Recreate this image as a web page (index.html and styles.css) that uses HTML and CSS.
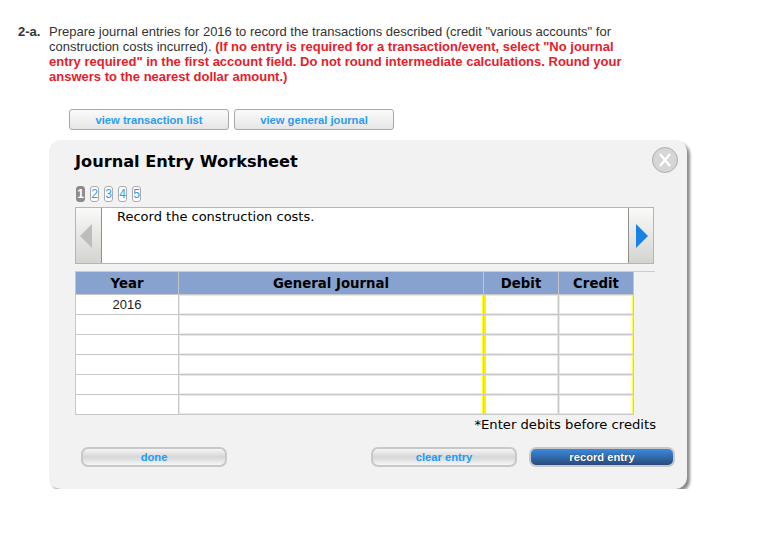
FILE: index.html
```html
<!DOCTYPE html>
<html lang="en">
<head>
  <meta charset="UTF-8" />
  <title>Journal Entry Worksheet</title>
  <link rel="stylesheet" href="styles.css">
</head>
<body>

  <div class="question">
    <div class="question-num">2-a.</div>
    <p class="question-text">Prepare journal entries for 2016 to record the transactions described (credit "various accounts" for construction costs incurred). <strong>(If no entry is required for a transaction/event, select "No journal entry required" in the first account field. Do not round intermediate calculations. Round your answers to the nearest dollar amount.)</strong></p>
  </div>

  <div class="view-btns">
    <button class="view-btn">view transaction list</button>
    <button class="view-btn">view general journal</button>
  </div>

  <div class="panel">
    <button class="close-btn">
      <svg viewBox="0 0 12 14" width="12" height="14"><path d="M1 1 L11 13 M11 1 L1 13" stroke="#fff" stroke-width="2.2" fill="none"/></svg>
    </button>

    <h2>Journal Entry Worksheet</h2>

    <div class="pager">
      <span class="page active">1</span>
      <span class="page">2</span>
      <span class="page">3</span>
      <span class="page">4</span>
      <span class="page">5</span>
    </div>

    <div class="message">
      <div class="arrow-btn prev">
        <svg viewBox="0 0 12 24" width="12" height="24"><polygon points="12,0 12,24 0,12" fill="#bcbdbc"/></svg>
      </div>
      <div class="message-text">Record the construction costs.</div>
      <div class="arrow-btn next">
        <svg viewBox="0 0 12 24" width="12" height="24"><polygon points="0,0 12,12 0,24" fill="#1782e4"/></svg>
      </div>
    </div>

    <div class="divider"></div>

    <table class="journal">
      <thead>
        <tr>
          <th class="col-year">Year</th>
          <th class="col-account">General Journal</th>
          <th class="col-amount">Debit</th>
          <th class="col-amount">Credit</th>
        </tr>
      </thead>
      <tbody>
        <tr><td class="year">2016</td><td class="entry"></td><td class="entry debit"></td><td class="entry"></td></tr>
        <tr><td class="year"></td><td class="entry"></td><td class="entry debit"></td><td class="entry"></td></tr>
        <tr><td class="year"></td><td class="entry"></td><td class="entry debit"></td><td class="entry"></td></tr>
        <tr><td class="year"></td><td class="entry"></td><td class="entry debit"></td><td class="entry"></td></tr>
        <tr><td class="year"></td><td class="entry"></td><td class="entry debit"></td><td class="entry"></td></tr>
        <tr><td class="year"></td><td class="entry"></td><td class="entry debit"></td><td class="entry"></td></tr>
      </tbody>
    </table>

    <div class="note">*Enter debits before credits</div>

    <div class="actions">
      <button class="pill">done</button>
      <div class="actions-right">
        <button class="pill">clear entry</button>
        <button class="pill primary">record entry</button>
      </div>
    </div>
  </div>

</body>
</html>
```

FILE: styles.css
```css
body {
  font-family: 'Liberation Sans', Arial, sans-serif;
  background-color: #fff;
  color: #333;
  margin: 0;
  padding: 24px 0 0 18px;
}

.question {
  display: flex;
  height: 85px;
}

.question-num {
  width: 31px;
  font-size: 13px;
  line-height: 15px;
  font-weight: bold;
}

.question-text {
  width: 580px;
  margin: 0;
  font-size: 13px;
  line-height: 15px;
}

.question-text strong {
  color: #e5202a;
}

.view-btns {
  display: flex;
  gap: 5px;
  margin-left: 51px;
}

.view-btn {
  width: 160px;
  height: 21px;
  padding: 0;
  font-family: 'Liberation Sans', Arial, sans-serif;
  font-size: 11.2px;
  font-weight: bold;
  color: #2b9cf2;
  background: linear-gradient(#fbfbfb, #e6e6e6);
  border: 1px solid #a8a8a8;
  border-radius: 3px;
}

.panel {
  position: relative;
  box-sizing: border-box;
  width: 638px;
  height: 349px;
  margin: 10px 0 0 31px;
  padding: 11px 33px 0 26px;
  background-color: #f2f2f2;
  border-radius: 12px;
  box-shadow: 3px 3px 3px #8c8c8c;
  font-family: 'DejaVu Sans', Verdana, sans-serif;
  color: #000;
}

.close-btn {
  position: absolute;
  top: 7px;
  right: 9px;
  width: 26px;
  height: 26px;
  padding: 0;
  display: flex;
  align-items: center;
  justify-content: center;
  background-color: #d6d6d6;
  border: 1px solid #adadad;
  border-radius: 50%;
}

h2 {
  margin: 0;
  height: 35px;
  font-size: 16.2px;
  line-height: 21px;
  font-weight: bold;
}

.pager {
  display: flex;
  gap: 5px;
  height: 16px;
  margin-left: 1px;
}

.page {
  box-sizing: border-box;
  width: 9px;
  height: 16px;
  font-family: 'Liberation Sans', Arial, sans-serif;
  font-size: 12px;
  line-height: 14px;
  text-align: center;
  color: #2b9cf2;
  background-color: #fff;
  border: 1px solid #aaa;
  border-radius: 3px;
}

.page.active {
  color: #fff;
  font-weight: bold;
  background-color: #8c8c8c;
  border-color: #8c8c8c;
}

.message {
  display: flex;
  box-sizing: border-box;
  width: 579px;
  height: 57px;
  margin-top: 5px;
  background-color: #fff;
  border: 1px solid #b5b5b5;
}

.message-text {
  flex: 1;
  padding: 1px 0 0 15px;
  font-size: 13px;
  line-height: 16px;
}

.arrow-btn {
  width: 25px;
  box-sizing: border-box;
  display: flex;
  align-items: center;
  justify-content: center;
  background: linear-gradient(#fafaf8, #d3d3d0);
}

.arrow-btn.prev {
  width: 26px;
  padding-right: 6px;
  border-right: 1px solid #8f8f8f;
}

.arrow-btn.next {
  padding-left: 2px;
  border-left: 1px solid #8f8f8f;
}

.divider {
  width: 580px;
  height: 1px;
  margin-top: 7px;
  background-color: #ccc;
}

.journal {
  width: 558px;
  table-layout: fixed;
  border-collapse: collapse;
  background-color: #fff;
}

.journal th {
  height: 22px;
  padding: 0;
  font-size: 13.3px;
  background-color: #88a2d0;
  border: 1px solid #c4c4c4;
  border-top: none;
  border-bottom: none;
}

.col-year {
  width: 102px;
}

.col-account {
  width: 304px;
}

.col-amount {
  width: 74px;
}

.journal td {
  height: 20px;
  padding: 0;
  box-sizing: border-box;
}

.year {
  font-family: 'Liberation Sans', Arial, sans-serif;
  font-size: 13px;
  text-align: center;
  color: #222;
  border: 1px solid #c8c8c8;
}

.entry {
  border: 1px solid #c8c8c8;
  box-shadow: inset 0 0 0 1px #ffff33;
}

.entry.debit {
  box-shadow: inset 2px 0 0 #ffee00, inset 0 0 0 1px #ffff33;
}

.note {
  width: 581px;
  height: 23px;
  font-size: 13.15px;
  line-height: 19px;
  text-align: right;
}

.actions {
  display: flex;
  justify-content: space-between;
  width: 594px;
  margin: 9px 0 0 6px;
}

.actions-right {
  display: flex;
  gap: 12px;
}

.pill {
  width: 146px;
  height: 20px;
  padding: 0;
  font-family: 'Liberation Sans', Arial, sans-serif;
  font-size: 11.2px;
  font-weight: bold;
  color: #1a9cff;
  background: linear-gradient(#f6f6f6, #d6d6d6 50%, #f6f6f6);
  border: 2px solid #c8c8c8;
  border-radius: 7px;
}

.pill.primary {
  color: #fff;
  text-shadow: 0 0 1px #223;
  background: linear-gradient(#3a8ade, #2a4a7c);
}
```
